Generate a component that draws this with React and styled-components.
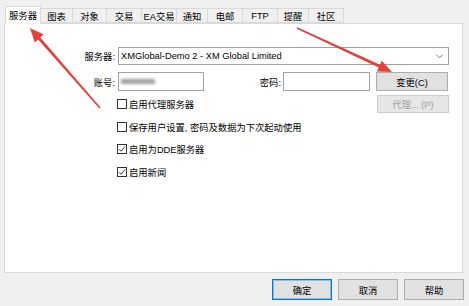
import React from "react";
import styled, { createGlobalStyle } from "styled-components";

const Global = createGlobalStyle`
  html, body { margin: 0; padding: 0; background: #f0f0f0; }
  body {
    width: 469px; height: 306px; overflow: hidden;
    font-family: "Liberation Sans", "Noto Sans CJK SC", sans-serif;
    font-size: 9.3px; color: #000;
  }
  * { box-sizing: border-box; }
`;

const Dialog = styled.div`
  position: relative;
  width: 469px;
  height: 306px;
  background: #f0f0f0;
  padding: 6px 6px 0 4px;
  display: flex;
  flex-direction: column;
`;

const TabStrip = styled.div`
  display: flex;
  align-items: flex-end;
  height: 17px;
  padding-left: 1px;
  position: relative;
  z-index: 2;
`;

const Tab = styled.div`
  width: ${(p) => p.$w}px;
  height: ${(p) => (p.$active ? 18 : 15)}px;
  margin-bottom: ${(p) => (p.$active ? -1 : 0)}px;
  margin-left: ${(p) => (p.$first ? 0 : -1)}px;
  border: 1px solid #d9d9d9;
  border-bottom: ${(p) => (p.$active ? "none" : "1px solid #d9d9d9")};
  background: ${(p) => (p.$active ? "#ffffff" : "#f0f0f0")};
  display: flex;
  align-items: center;
  justify-content: center;
  padding-bottom: ${(p) => (p.$active ? 2 : 0)}px;
  position: relative;
  z-index: ${(p) => (p.$active ? 3 : 1)};
  white-space: nowrap;
`;

const Panel = styled.div`
  width: 459px;
  height: 250px;
  background: #fff;
  border: 1px solid #d9d9d9;
  padding: 23px 13px 0 0;
  display: flex;
  flex-direction: column;
`;

const Row = styled.div`
  display: flex;
  align-items: center;
  margin-top: ${(p) => p.$mt || 0}px;
`;

const Label = styled.div`
  width: ${(p) => p.$w}px;
  text-align: right;
  white-space: nowrap;
  margin-right: ${(p) => p.$gap}px;
`;

const Combo = styled.div`
  flex: 1;
  height: 18px;
  border: 1px solid #a0a0a0;
  background: #fff;
  display: flex;
  align-items: center;
  justify-content: space-between;
  padding: 0 5px 0 2px;
  white-space: nowrap;
`;

const Input = styled.div`
  width: ${(p) => p.$w}px;
  height: 19px;
  border: 1px solid #7a7a7a;
  border-color: #a0a0a0;
  background: #fff;
  display: flex;
  align-items: center;
  padding-left: 2px;
`;

const Blurred = styled.span`
  display: block;
  width: 34px;
  height: 5px;
  background: #8c8c8c;
  filter: blur(1.6px);
  opacity: 0.85;
`;

const Button = styled.div`
  width: ${(p) => p.$w}px;
  height: ${(p) => p.$h}px;
  margin-left: ${(p) => p.$ml || 0}px;
  background: ${(p) => (p.$disabled ? "#e6e6e6" : "#e1e1e1")};
  border: 1px solid ${(p) => (p.$default ? "#0078d7" : p.$disabled ? "#cccccc" : "#adadad")};
  box-shadow: ${(p) => (p.$default ? "inset 0 0 0 1px rgba(0,120,215,0.35)" : "none")};
  color: ${(p) => (p.$disabled ? "#a0a0a0" : "#000")};
  display: flex;
  align-items: center;
  justify-content: center;
  white-space: nowrap;
`;

const Lower = styled.div`
  display: flex;
  justify-content: space-between;
  margin-top: 4px;
`;

const CheckList = styled.div`
  display: flex;
  flex-direction: column;
  gap: 4.5px;
  padding-left: 112px;
`;

const CheckItem = styled.div`
  display: flex;
  align-items: center;
  height: 18px;
  white-space: nowrap;
`;

const Box = styled.span`
  width: 10px;
  height: 10px;
  border: 1px solid #333;
  background: #fff;
  margin-right: 2px;
  display: flex;
  align-items: center;
  justify-content: center;
`;

const Footer = styled.div`
  display: flex;
  justify-content: flex-end;
  gap: 6px;
  margin-top: 6px;
  margin-right: -1px;
`;

const Overlay = styled.svg`
  position: absolute;
  left: 0;
  top: 0;
  pointer-events: none;
  z-index: 10;
`;

const tabs = [
  ["服务器", 36],
  ["图表", 33],
  ["对象", 35],
  ["交易", 36],
  ["EA交易", 36],
  ["通知", 32],
  ["电邮", 36],
  ["FTP", 36],
  ["提醒", 32],
  ["社区", 36],
];

const checks = [
  ["启用代理服务器", false],
  ["保存用户设置, 密码及数据为下次起动使用", false],
  ["启用为DDE服务器", true],
  ["启用新闻", true],
];

const Check = ({ on }) => (
  <Box>
    {on && (
      <svg width="8" height="8" viewBox="0 0 8 8">
        <path d="M1 4.2 L3 6.2 L7 1.6" fill="none" stroke="#333" strokeWidth="1" />
      </svg>
    )}
  </Box>
);

export default function App() {
  return (
    <>
      <Global />
      <Dialog>
        <TabStrip>
          {tabs.map(([t, w], i) => (
            <Tab key={t} $w={w} $first={i === 0} $active={i === 0}>
              {t}
            </Tab>
          ))}
        </TabStrip>
        <Panel>
          <Row>
            <Label $w={110} $gap={3}>服务器:</Label>
            <Combo>
              <span>XMGlobal-Demo 2 - XM Global Limited</span>
              <svg width="7" height="5" viewBox="0 0 7 5">
                <path d="M0.5 0.8 L3.5 3.8 L6.5 0.8" fill="none" stroke="#666" strokeWidth="0.9" />
              </svg>
            </Combo>
          </Row>
          <Row $mt={7}>
            <Label $w={110} $gap={3}>账号:</Label>
            <Input $w={86}>
              <Blurred />
            </Input>
            <Label $w={77} $gap={2}>密码:</Label>
            <Input $w={87} />
            <Button $w={72} $h={19} $ml={6}>变更(C)</Button>
          </Row>
          <Lower>
            <CheckList>
              {checks.map(([t, on]) => (
                <CheckItem key={t}>
                  <Check on={on} />
                  {t}
                </CheckItem>
              ))}
            </CheckList>
            <Button $w={72} $h={18} $disabled>代理... (P)</Button>
          </Lower>
        </Panel>
        <Footer>
          <Button $w={60} $h={21} $default>确定</Button>
          <Button $w={60} $h={21}>取消</Button>
          <Button $w={60} $h={21}>帮助</Button>
        </Footer>
        <Overlay width="469" height="306" viewBox="0 0 469 306">
          <polygon
            fill="#e4403a"
            points="100.6,107.5 40.3,37.5 43.7,34.6 30,28 34.7,42.4 38.1,39.5 99.4,108.5"
          />
          <polygon
            fill="#e4403a"
            points="297.34,27.27 379.9,64.7 381.8,60.7 392,72 376.8,71.5 378.7,67.5 296.66,28.73"
          />
        </Overlay>
      </Dialog>
    </>
  );
}
